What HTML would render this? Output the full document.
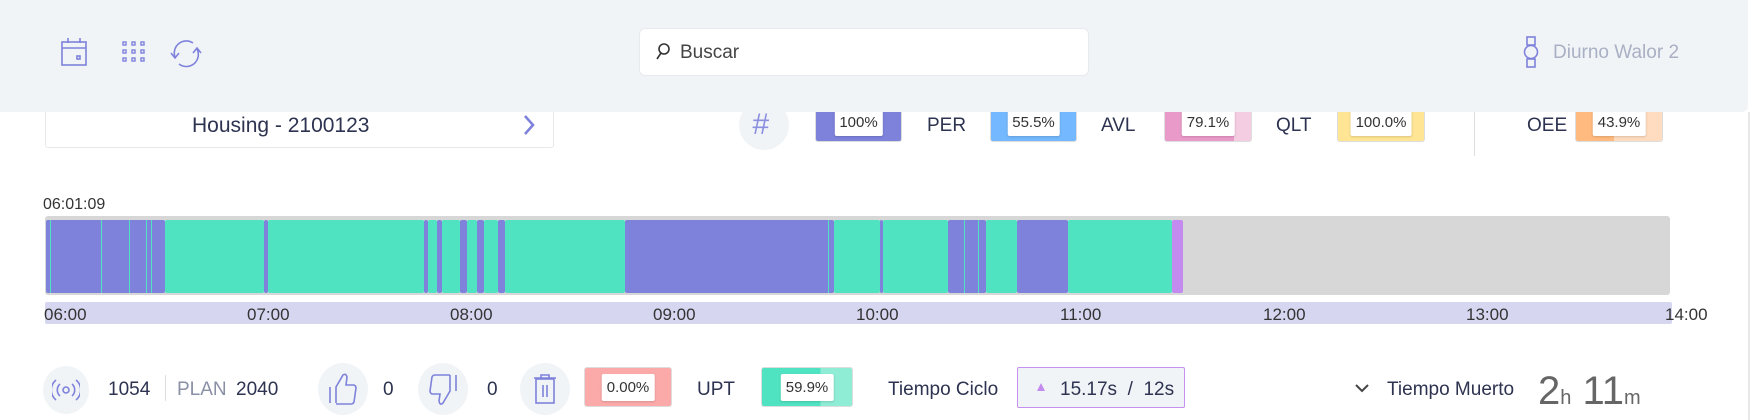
<!DOCTYPE html>
<html><head><meta charset="utf-8"><style>
*{margin:0;padding:0;box-sizing:border-box}
body{width:1750px;height:420px;overflow:hidden;background:#fff;font-family:"Liberation Sans",sans-serif;color:#2d3350;position:relative}
.a{position:absolute}
.hdr{left:0;top:0;width:1748px;height:112px;background:#f1f4f7;border-bottom-right-radius:6px;z-index:2}
.t{position:absolute;white-space:nowrap;line-height:1}
.box{position:absolute;height:36px;border-radius:3px;overflow:hidden;border:1px solid #ddd}
.lab{position:absolute;left:50%;transform:translateX(-50%);top:2px;background:#fff;border-radius:2px;padding:6px 5px;font-size:15px;color:#333;line-height:1;box-shadow:0 1px 2px rgba(0,0,0,.15)}
.circ{position:absolute;background:#f1f4f7;border-radius:50%}
.seg{position:absolute;top:220px;height:73px;border-radius:2px}
.p{background:#7e82db}.g{background:#50e3c2}
.hl{position:absolute;top:305px;font-size:17px;color:#333}
</style></head><body>
<div class="a hdr">
 <svg class="a" style="left:60px;top:37px" width="28" height="30" viewBox="0 0 28 30" fill="none" stroke="#7e82db" stroke-width="1.6"><rect x="2" y="5" width="24" height="23"/><line x1="2" y1="11" x2="26" y2="11"/><line x1="8" y1="1" x2="8" y2="6"/><line x1="20" y1="1" x2="20" y2="6"/><rect x="17" y="19" width="3" height="3"/></svg>
 <svg class="a" style="left:122px;top:41px" width="24" height="22" viewBox="0 0 24 22" fill="none" stroke="#7e82db" stroke-width="1.4"><rect x="1" y="1" width="3" height="3"/><rect x="10" y="1" width="3" height="3"/><rect x="19" y="1" width="3" height="3"/><rect x="1" y="9" width="3" height="3"/><rect x="10" y="9" width="3" height="3"/><rect x="19" y="9" width="3" height="3"/><rect x="1" y="17" width="3" height="3"/><rect x="10" y="17" width="3" height="3"/><rect x="19" y="17" width="3" height="3"/></svg>
 <svg class="a" style="left:169px;top:37px" width="34" height="32" viewBox="0 0 34 32" fill="none" stroke="#7e82db" stroke-width="1.6"><path d="M6 20 A12 12 0 0 1 24 6"/><path d="M28 12 A12 12 0 0 1 10 27"/><path d="M2 16 L6 21 L10 16"/><path d="M24 16 L28 11 L32 16"/></svg>
 <div class="a" style="left:639px;top:28px;width:450px;height:48px;background:#fff;border-radius:6px;border:1px solid #e6e9ee"></div>
 <svg class="a" style="left:655px;top:42px" width="16" height="20" viewBox="0 0 16 20" fill="none" stroke="#333" stroke-width="1.6"><circle cx="9" cy="7" r="5"/><line x1="6" y1="11" x2="2" y2="17"/></svg>
 <div class="t" style="left:680px;top:43px;font-size:19px;color:#444">Buscar</div>
 <svg class="a" style="left:1523px;top:36px" width="16" height="32" viewBox="0 0 16 32" fill="none" stroke="#7e82db" stroke-width="1.6"><rect x="4" y="1" width="8" height="8"/><rect x="4" y="23" width="8" height="8"/><circle cx="8" cy="16" r="6.5"/></svg>
 <div class="t" style="left:1553px;top:43px;font-size:19px;color:#a9b0c4">Diurno Walor 2</div>
</div>

<div class="a" style="left:45px;top:100px;width:509px;height:48px;border:1px solid #e8e8e8;border-radius:3px;background:#fff"></div>
<div class="t" style="left:192px;top:115px;font-size:21px;color:#2d3350">Housing - 2100123</div>
<svg class="a" style="left:522px;top:113px" width="14" height="24" viewBox="0 0 14 24" fill="none" stroke="#7e82db" stroke-width="2.6"><path d="M3 3 L11 12 L3 21"/></svg>

<div class="circ" style="left:739px;top:100px;width:50px;height:50px"></div>
<div class="t" style="left:752px;top:110px;font-size:30px;color:#8a8fe0;font-style:italic">#</div>
<div class="box" style="left:815px;top:106px;width:87px;background:#7e82db"><div class="lab">100%</div></div>
<div class="t" style="left:927px;top:116px;font-size:19px">PER</div>
<div class="box" style="left:990px;top:106px;width:87px;background:#74b9ff"><div class="lab">55.5%</div></div>
<div class="t" style="left:1101px;top:116px;font-size:19px">AVL</div>
<div class="box" style="left:1164px;top:106px;width:88px;background:linear-gradient(90deg,#e99ac9 0 80%,#f5cde3 80%)"><div class="lab">79.1%</div></div>
<div class="t" style="left:1276px;top:116px;font-size:19px">QLT</div>
<div class="box" style="left:1337px;top:106px;width:88px;background:#ffe594"><div class="lab">100.0%</div></div>
<div class="a" style="left:1474px;top:108px;width:1px;height:48px;background:#ddd"></div>
<div class="t" style="left:1527px;top:116px;font-size:19px">OEE</div>
<div class="box" style="left:1575px;top:106px;width:88px;background:linear-gradient(90deg,#ffba7f 0 44%,#ffdcbf 44%)"><div class="lab">43.9%</div></div>

<div class="t" style="left:43px;top:197px;font-size:16px;color:#333">06:01:09</div>
<div class="a" style="left:45px;top:216px;width:1625px;height:79px;background:#d7d7d7;border-radius:3px"></div>
<div class="seg p" style="left:46px;width:119px"></div>
<div class="seg g" style="left:50px;width:1px;border-radius:0"></div>
<div class="seg g" style="left:101px;width:1px;border-radius:0"></div>
<div class="seg g" style="left:129px;width:1px;border-radius:0"></div>
<div class="seg g" style="left:146px;width:1px;border-radius:0"></div>
<div class="seg g" style="left:151px;width:1px;border-radius:0"></div>
<div class="seg g" style="left:165px;width:99px"></div>
<div class="seg p" style="left:264px;width:4px"></div>
<div class="seg g" style="left:268px;width:156px"></div>
<div class="seg p" style="left:424px;width:4px"></div>
<div class="seg g" style="left:428px;width:9px"></div>
<div class="seg p" style="left:437px;width:5px"></div>
<div class="seg g" style="left:442px;width:18px"></div>
<div class="seg p" style="left:460px;width:7px"></div>
<div class="seg g" style="left:467px;width:10px"></div>
<div class="seg p" style="left:477px;width:7px"></div>
<div class="seg g" style="left:484px;width:14px"></div>
<div class="seg p" style="left:498px;width:7px"></div>
<div class="seg g" style="left:505px;width:120px"></div>
<div class="seg p" style="left:625px;width:209px"></div>
<div class="seg g" style="left:828px;width:1px;border-radius:0"></div>
<div class="seg g" style="left:834px;width:46px"></div>
<div class="seg p" style="left:880px;width:3px"></div>
<div class="seg g" style="left:883px;width:65px"></div>
<div class="seg p" style="left:948px;width:38px"></div>
<div class="seg g" style="left:964px;width:1px;border-radius:0"></div>
<div class="seg g" style="left:978px;width:1px;border-radius:0"></div>
<div class="seg g" style="left:986px;width:31px"></div>
<div class="seg p" style="left:1017px;width:51px"></div>
<div class="seg g" style="left:1068px;width:104px"></div>
<div class="seg" style="left:1172px;width:11px;background:#c38bf0"></div>

<div class="a" style="left:45px;top:302px;width:1627px;height:22px;background:#d6d6f0;border-radius:2px"></div>
<div class="hl" style="left:44px">06:00</div>
<div class="hl" style="left:247px">07:00</div>
<div class="hl" style="left:450px">08:00</div>
<div class="hl" style="left:653px">09:00</div>
<div class="hl" style="left:856px">10:00</div>
<div class="hl" style="left:1060px">11:00</div>
<div class="hl" style="left:1263px">12:00</div>
<div class="hl" style="left:1466px">13:00</div>
<div class="hl" style="left:1665px">14:00</div>

<div class="circ" style="left:43px;top:366px;width:46px;height:48px"></div>
<svg class="a" style="left:52px;top:376px" width="28" height="28" viewBox="0 0 28 28" fill="none" stroke="#7e82db" stroke-width="1.6"><circle cx="14" cy="14" r="3"/><path d="M8 8 A8 8 0 0 0 8 20 M20 8 A8 8 0 0 1 20 20"/><path d="M4 4 A13 13 0 0 0 4 24 M24 4 A13 13 0 0 1 24 24"/></svg>
<div class="t" style="left:108px;top:380px;font-size:19px">1054</div>
<div class="a" style="left:165px;top:375px;width:1px;height:26px;background:#ddd"></div>
<div class="t" style="left:177px;top:380px;font-size:19px;color:#8a90a6">PLAN</div>
<div class="t" style="left:236px;top:380px;font-size:19px">2040</div>
<div class="circ" style="left:318px;top:363px;width:50px;height:52px"></div>
<svg class="a" style="left:327px;top:371px" width="32" height="36" viewBox="0 0 32 36" fill="none" stroke="#7e82db" stroke-width="1.6"><line x1="3" y1="16" x2="3" y2="32"/><path d="M9 32 L9 16 L16 4 Q19 2 20 6 L19 14 L27 14 Q29 15 29 17 L27 31 Q26 33 24 33 L9 33"/></svg>
<div class="t" style="left:383px;top:380px;font-size:19px">0</div>
<div class="circ" style="left:418px;top:363px;width:50px;height:52px"></div>
<svg class="a" style="left:427px;top:372px" width="32" height="36" viewBox="0 0 32 36" fill="none" stroke="#7e82db" stroke-width="1.6"><line x1="29" y1="3" x2="29" y2="19"/><path d="M23 3 L23 19 L16 31 Q13 34 12 29 L13 22 L5 22 Q3 21 3 19 L5 5 Q6 3 8 3 L23 3"/></svg>
<div class="t" style="left:487px;top:380px;font-size:19px">0</div>
<div class="circ" style="left:520px;top:363px;width:50px;height:52px"></div>
<svg class="a" style="left:532px;top:373px" width="26" height="32" viewBox="0 0 26 32" fill="none" stroke="#7e82db" stroke-width="1.6"><path d="M2 5 L24 5 M9 5 L9 2 L17 2 L17 5"/><rect x="4" y="6" width="18" height="24"/><line x1="11" y1="12" x2="11" y2="24"/><line x1="15" y1="12" x2="15" y2="24"/></svg>
<div class="box" style="left:584px;top:367px;width:88px;height:40px;background:#fbaaa9"><div class="lab" style="top:6px">0.00%</div></div>
<div class="t" style="left:697px;top:380px;font-size:19px">UPT</div>
<div class="box" style="left:761px;top:367px;width:92px;height:40px;background:linear-gradient(90deg,#50e3c2 0 65%,#8fedd5 65%)"><div class="lab" style="top:6px">59.9%</div></div>
<div class="t" style="left:888px;top:380px;font-size:19px">Tiempo Ciclo</div>
<div class="a" style="left:1017px;top:367px;width:168px;height:41px;background:#f1f4f7;border:1px solid #c590f0;border-radius:2px"></div>
<svg class="a" style="left:1036px;top:382px" width="10" height="10" viewBox="0 0 10 10"><path d="M5 1 L9 9 L1 9Z" fill="#c38bf0"/></svg>
<div class="t" style="left:1060px;top:380px;font-size:19px">15.17s &nbsp;/ &nbsp;12s</div>
<svg class="a" style="left:1354px;top:382px" width="16" height="12" viewBox="0 0 16 12" fill="none" stroke="#444" stroke-width="2"><path d="M2 3 L8 9 L14 3"/></svg>
<div class="t" style="left:1387px;top:380px;font-size:19px">Tiempo Muerto</div>
<div class="t" style="left:1538px;top:371px;font-size:40px;color:#666">2<span style="font-size:20px">h</span> 11<span style="font-size:20px">m</span></div>
<div class="a" style="left:1748px;top:112px;width:2px;height:308px;background:#e8e8e8"></div>
</body></html>
